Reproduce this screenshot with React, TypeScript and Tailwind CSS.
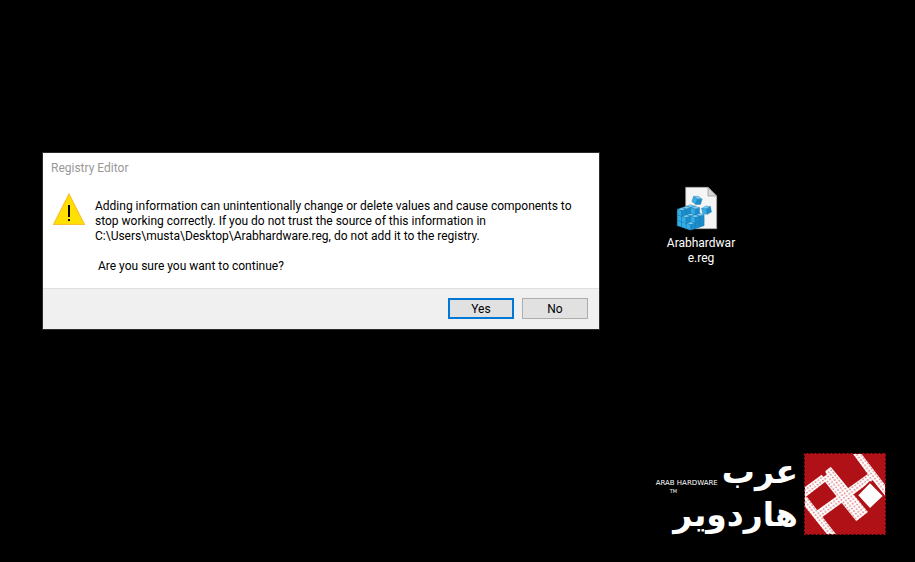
import React from "react";

const message = [
  "Adding information can unintentionally change or delete values and cause components to",
  "stop working correctly. If you do not trust the source of this information in",
  "C:\\Users\\musta\\Desktop\\Arabhardware.reg, do not add it to the registry.",
];

const WarningIcon: React.FC = () => (
  <svg className="w-8 h-8 shrink-0" viewBox="0 0 32 32" aria-hidden="true">
    <path d="M16 1 31.4 31.5H.6Z" fill="#ffe000" stroke="#fbc02d" strokeWidth="1.2" />
    <path d="M15 12h2v12h-2zM15 26h2v2h-2z" fill="#000" />
  </svg>
);

// missing blocks of the 3x3x3 cube, as "layer right left" (layer 2 is the top)
const holes = ["220", "221", "222", "211", "212", "122"];

const blocks: { x: number; y: number; key: string }[] = [];
for (let layer = 0; layer < 3; layer++) {
  for (let i = 0; i < 3; i++) {
    for (let j = 0; j < 3; j++) {
      const key = `${layer}${i}${j}`;
      if (holes.includes(key)) continue;
      blocks.push({ key, x: 56 + (i - j) * 13.5, y: 62 + (i + j) * 4.5 + (2 - layer) * 16.5 });
    }
  }
}

const Block: React.FC<{ x: number; y: number; turn?: number }> = ({ x, y, turn = 0 }) => (
  <g transform={`translate(${x} ${y}) rotate(${turn})`} stroke="#1173ab" strokeWidth="1" strokeLinejoin="round">
    <path d="M0 0 13.5 4.5 0 9-13.5 4.5Z" fill="#7ccdf2" />
    <path d="M-13.5 4.5 0 9V25.5L-13.5 21Z" fill="#35aee6" />
    <path d="M13.5 4.5 0 9V25.5L13.5 21Z" fill="#1c8ccb" />
  </g>
);

const RegFileIcon: React.FC = () => (
  <svg className="w-[50px] h-[50px] self-start ml-[9px]" viewBox="0 0 150 150" aria-hidden="true">
    <path d="M41 10H108L134 36V134H41Z" fill="#f5f5f5" stroke="#a5a5a5" strokeWidth="2" />
    <path d="M108 10V36H134Z" fill="#d8d8d8" stroke="#8c8c8c" strokeWidth="2" />
    {blocks.map((b) => (
      <Block key={b.key} x={b.x} y={b.y} />
    ))}
    <Block x={79} y={37} turn={18} />
    <Block x={101} y={66} turn={-12} />
  </svg>
);

const LogoMark: React.FC = () => (
  <svg className="w-[82px] h-[82px] shrink-0" viewBox="24 23 246 246" aria-hidden="true">
    <defs>
      <pattern id="dots" width="14" height="14" patternUnits="userSpaceOnUse" patternTransform="rotate(8)">
        <rect width="14" height="14" fill="#fff" />
        <rect x="1" y="1" width="5" height="4" fill="#d9757a" />
        <rect x="8" y="8" width="5" height="4" fill="#d9757a" />
      </pattern>
    </defs>
    <rect x="24" y="23" width="246" height="246" fill="#b01116" />
    <g fill="url(#dots)">
      <path d="M171 26H197L267 118V151L215 86Z" />
      <path d="M60 197 224 80 240 98 78 216Z" />
      <path d="M26 126 77 88 92 106 30 154H26Z" />
      <path d="M26 152 34 156 120 267H93L26 183Z" />
      <path d="M91 89 88 77 104 64 216 200 181 228 85 107 79 96Z" />
    </g>
    <path d="M222 106 266 150 222 194 179 150Z" fill="#b01116" />
    <path d="M222 114 260 152 222 188 187 150Z" fill="#fff" />
    <rect x="25.5" y="24.5" width="243" height="243" fill="none" stroke="#1a0203" strokeWidth="3" strokeDasharray="6 6" />
  </svg>
);

const App: React.FC = () => {
  return (
    <main className="min-h-screen bg-black flex flex-col justify-between gap-8 pt-[152px] pb-[27px] pl-[42px] pr-[29px] text-xs leading-[15px] font-[Roboto,'Open_Sans',sans-serif]">
      <div className="flex items-start gap-[63px]">
        <section
          role="dialog"
          aria-labelledby="dialog-title"
          className="flex-1 max-w-[558px] border border-[#2b2b2b] bg-white text-black"
        >
          <h1 id="dialog-title" className="px-2 pt-2 text-[#999999]">Registry Editor</h1>
          <div className="flex gap-[10px] pl-[10px] pr-4 pt-[17px] pb-[14px]">
            <WarningIcon />
            <div className="pt-1.5">
              <p>
                {message.map((line) => (
                  <span key={line} className="block whitespace-nowrap">{line}</span>
                ))}
              </p>
              <p className="pt-[15px] pl-[3px]">Are you sure you want to continue?</p>
            </div>
          </div>
          <div className="flex justify-end gap-2 border-t border-[#dfdfdf] bg-[#f0f0f0] pt-[9px] pb-[10px] pr-[11px]">
            <button className="w-[66px] h-[21px] pt-px border-2 border-[#0078d7] bg-[#e1e1e1]">Yes</button>
            <button className="w-[66px] h-[21px] pt-px border border-[#adadad] bg-[#e1e1e1]">No</button>
          </div>
        </section>

        <button className="w-[76px] pt-8 flex flex-col items-center text-white">
          <RegFileIcon />
          <span className="pt-0.5">
            Arabhardwar
            <wbr />
            e.reg
          </span>
        </button>
      </div>

      <footer className="self-end flex items-end gap-[6px] text-white">
        <div className="flex flex-col items-end font-['DejaVu_Sans',sans-serif] font-bold">
          <div className="flex items-end gap-1">
            <div className="flex flex-col font-normal">
              <span className="text-[7px] leading-[8px]">ARAB HARDWARE</span>
              <span className="pl-[14px] text-[5px] leading-[8px]">TM</span>
            </div>
            <span lang="ar" dir="rtl" className="text-[33px] leading-[42px] pb-0.5">عرب</span>
          </div>
          <span lang="ar" dir="rtl" className="text-[33px] leading-[40px]">هاردوير</span>
        </div>
        <LogoMark />
      </footer>
    </main>
  );
};

export default App;
